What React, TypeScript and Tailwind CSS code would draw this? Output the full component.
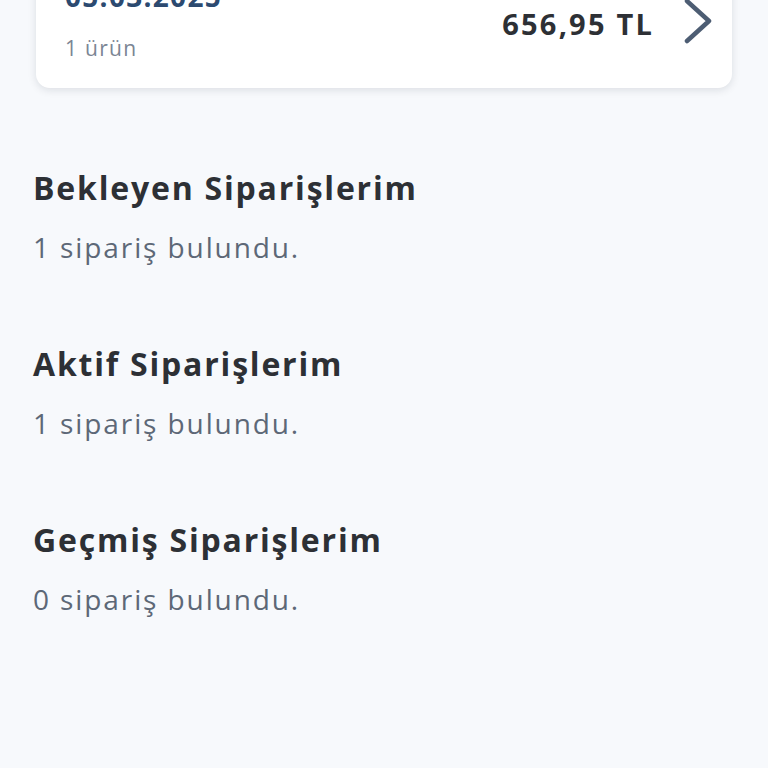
import React from "react";

const sections = [
  { title: "Bekleyen Siparişlerim", count: 1 },
  { title: "Aktif Siparişlerim", count: 1 },
  { title: "Geçmiş Siparişlerim", count: 0 },
];

function OrderCard() {
  return (
    <div className="px-[36px] -mt-[40px]">
      <div className="flex items-center rounded-[14px] bg-white pl-[29px] pr-[18px] pt-[16px] pb-[25px] shadow-[0_2px_8px_rgba(15,23,42,0.12)]">
        <div className="flex flex-1 flex-col">
          <div className="text-[28px] font-bold leading-[40px] tracking-[1.3px] text-[#2c4a70]">05.03.2025</div>
          <div className="mt-[17px] text-[21px] leading-[30px] tracking-[1.3px] text-[#7b8594]">1 ürün</div>
        </div>
        <div className="mt-[8px] text-[29px] font-bold leading-[40px] tracking-[2.2px] text-[#2d3035]">656,95 TL</div>
        <svg
          className="ml-[28px] mt-[3px]"
          width="32"
          height="48"
          viewBox="0 0 32 48"
          fill="none"
          stroke="#4d5d73"
          strokeWidth="4.5"
          strokeLinecap="round"
          strokeLinejoin="round"
        >
          <path d="M5 4 L27 24 L5 44" />
        </svg>
      </div>
    </div>
  );
}

export default function App() {
  return (
    <div
      className="min-h-screen overflow-hidden bg-[#f7f9fc]"
      style={{ fontFamily: "'Open Sans', 'Noto Sans', sans-serif" }}
    >
      <OrderCard />
      <div className="mt-[80px] flex flex-col gap-[79px] px-[33px]">
        {sections.map((s) => (
          <div key={s.title}>
            <div className="text-[32px] font-bold leading-[40px] tracking-[1.8px] text-[#2d3035]">{s.title}</div>
            <div className="mt-[21px] text-[28px] leading-[36px] tracking-[1.9px] text-[#5d6877]">
              {s.count} sipariş bulundu.
            </div>
          </div>
        ))}
      </div>
    </div>
  );
}
